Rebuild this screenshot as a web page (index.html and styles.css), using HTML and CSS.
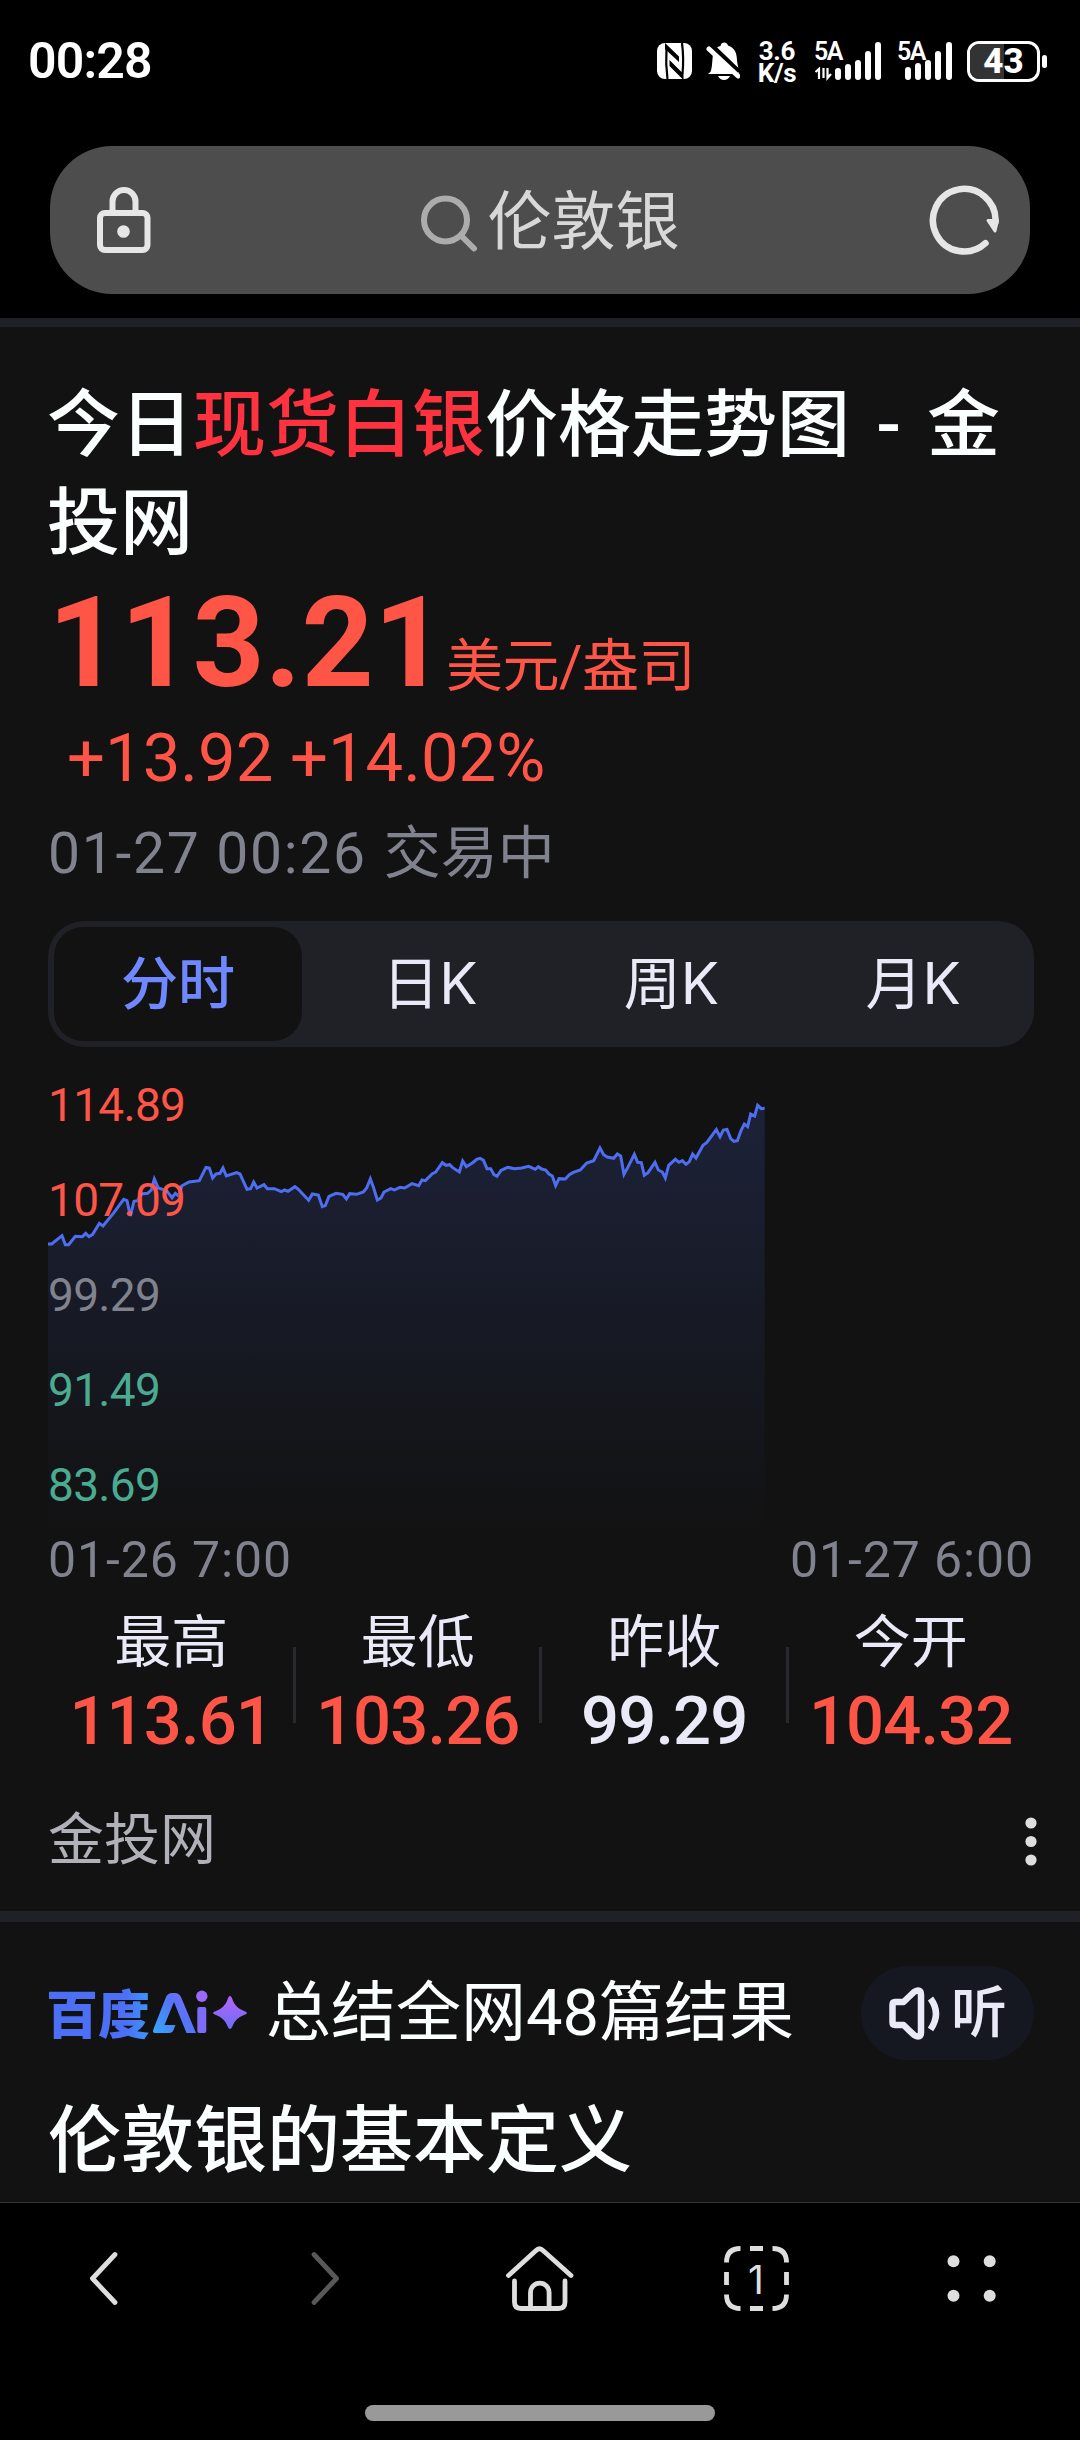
FILE: index.html
```html
<!DOCTYPE html>
<html lang="zh-CN">
<head>
<meta charset="utf-8">
<title>伦敦银</title>
<link rel="stylesheet" href="styles.css">
</head>
<body>
<header class="top">
  <div class="status">
    <span class="clock">00:28</span>
    <div class="status-icons">
      <svg class="nfc" width="36" height="38" viewBox="656 42 36 38"><rect x="657" y="43" width="35" height="36" rx="8" fill="#fff"/><path d="M666.500 48Q665.500 64 667.500 79M682 43Q684 58 682.500 74" fill="none" stroke="#000" stroke-width="2.200"/><path d="M665 43L679 56.500V62L665 49ZM669.500 60L683.500 74V80L669.500 66Z" fill="#000"/></svg>
      <svg class="bell" width="34" height="40" viewBox="706 41 34 40"><path d="M710.500 72C712 68 712 64 712.500 59C713 51 716 47 720.500 46C721 41.500 727 41.500 728 45.500C734.500 47.500 737 53 737 61L739 72Q739 74 736 74H709Q707 74 710.500 72Z" fill="#fff"/><path d="M718 76h12q-2 4-6 4t-6-4Z" fill="#fff"/><path d="M710 44l29 28" stroke="#000" stroke-width="5"/><path d="M709 49l29 27" stroke="#fff" stroke-width="5" stroke-linecap="round"/></svg>
      <span class="speed"><span>3.6</span><span>K/s</span></span>
      <span class="signal"><b>5A</b><svg width="70" height="40" viewBox="813 41 70 40"><g stroke="#fff" stroke-width="6" stroke-linecap="round"><path d="M838 71v6M848 67v10M858 63v14M868 54v23M878 45v32"/></g><path d="M815.500 72l3.500-3v10M823.500 68v10M827.500 68v10l3.500-4" fill="none" stroke="#fff" stroke-width="2.200"/></svg></span>
      <span class="signal second"><b>5A</b><svg width="58" height="40" viewBox="896 41 58 40"><g stroke="#fff" stroke-width="6" stroke-linecap="round"><path d="M908 70v7M918 66v11M928 63v14M938 54v23M949 45v32"/></g></svg></span>
      <span class="battery"><span class="charge"></span><span class="percent">43</span></span><i class="nub"></i>
    </div>
  </div>
  <div class="search">
    <svg width="64" height="76" viewBox="92 181 64 76" fill="none" stroke="#e6e6e6" stroke-width="6"><path d="M112.500 210V200.500a11.500 11.500 0 0 1 23 0V210"/><rect x="100" y="212" width="47.500" height="37" rx="5"/><circle cx="123.500" cy="230.500" r="6.300" fill="#e6e6e6" stroke="none"/></svg>
    <div class="query"><svg width="60" height="66" viewBox="418 185 60 66" fill="none" stroke="#acacac" stroke-width="6" stroke-linecap="round"><circle cx="444.500" cy="218" r="21.500"/><path d="M461 234.500l12 12"/></svg><span>伦敦银</span></div>
    <svg width="76" height="76" viewBox="926 181 76 76" fill="none" stroke="#e6e6e6" stroke-width="6.500" stroke-linecap="round"><path d="M985.500 242.200A31.300 31.300 0 1 1 995.500 221"/><path d="M988 219.500h9.500l-2.500 10.500Z" fill="#e6e6e6" stroke-width="3" stroke-linejoin="round"/></svg>
  </div>
</header>
<main>
  <article class="quote">
    <h1>今日<em>现货白银</em>价格走势图 - 金投网</h1>
    <div class="price"><strong>113.21</strong><span>美元/盎司</span></div>
    <div class="change"><span>+13.92</span> <span>+14.02%</span></div>
    <div class="time"><time>01-27 00:26</time> 交易中</div>
    <nav class="tabs"><a class="active">分时</a><a>日K</a><a>周K</a><a>月K</a></nav>
    <div class="chart">
      <svg width="986" height="455" viewBox="144 0 2958 1365">
        <defs>
          <linearGradient id="area" gradientUnits="userSpaceOnUse" x1="0" y1="76" x2="0" y2="1365"><stop offset="0" stop-color="#4e6ef2" stop-opacity=".17"/><stop offset="1" stop-color="#4e6ef2" stop-opacity="0"/></linearGradient>
          <path id="line" d="M144 492L155 492L186 467L196 494L206 494L226 469L247 470L257 460L267 470L278 463L298 430L309 438L340 400L371 358L381 362L391 408L402 364L412 362L424 342L443 340L454 330L463 297L475 324L500 332L516 353L526 340L536 348L545 318L567 306L598 302L618 262L628 264L638 294L648 282L660 280L669 264L679 288L710 278L720 282L741 328L752 326L761 306L771 324L792 314L802 326L823 326L844 335L854 330L864 334L885 320L895 328L926 361L937 342L955 345L967 380L976 377L987 349L1008 340L1028 343L1039 357L1049 341L1070 343L1090 336L1100 324L1111 297L1121 324L1132 360L1143 354L1152 336L1172 326L1183 330L1200 322L1214 324L1236 311L1256 317L1266 300L1276 302L1297 281L1307 276L1327 248L1338 256L1349 254L1358 263L1378 276L1388 243L1399 260L1418 248L1430 238L1440 235L1450 240L1461 266L1472 266L1482 284L1491 289L1503 271L1523 262L1544 266L1565 264L1586 259L1606 268L1615 260L1625 267L1637 270L1647 282L1657 288L1667 317L1677 296L1696 297L1708 284L1720 277L1741 270L1760 249L1781 242L1800 204L1811 224L1822 231L1841 235L1852 222L1862 228L1872 283L1883 263L1903 223L1913 247L1924 248L1933 286L1944 278L1965 247L1975 270L1987 276L1996 294L2006 256L2026 238L2037 247L2047 242L2058 253L2068 245L2078 222L2088 234L2109 196L2120 188L2149 149L2160 170L2170 150L2181 148L2192 176L2202 184L2212 182L2223 152L2233 132L2243 140L2252 102L2264 108L2273 76L2284 86L2294 85"/>
          <clipPath id="plot"><rect x="144" y="0" width="2151" height="1365"/></clipPath>
        </defs>
        <path fill="url(#area)" d="M144 492L155 492L186 467L196 494L206 494L226 469L247 470L257 460L267 470L278 463L298 430L309 438L340 400L371 358L381 362L391 408L402 364L412 362L424 342L443 340L454 330L463 297L475 324L500 332L516 353L526 340L536 348L545 318L567 306L598 302L618 262L628 264L638 294L648 282L660 280L669 264L679 288L710 278L720 282L741 328L752 326L761 306L771 324L792 314L802 326L823 326L844 335L854 330L864 334L885 320L895 328L926 361L937 342L955 345L967 380L976 377L987 349L1008 340L1028 343L1039 357L1049 341L1070 343L1090 336L1100 324L1111 297L1121 324L1132 360L1143 354L1152 336L1172 326L1183 330L1200 322L1214 324L1236 311L1256 317L1266 300L1276 302L1297 281L1307 276L1327 248L1338 256L1349 254L1358 263L1378 276L1388 243L1399 260L1418 248L1430 238L1440 235L1450 240L1461 266L1472 266L1482 284L1491 289L1503 271L1523 262L1544 266L1565 264L1586 259L1606 268L1615 260L1625 267L1637 270L1647 282L1657 288L1667 317L1677 296L1696 297L1708 284L1720 277L1741 270L1760 249L1781 242L1800 204L1811 224L1822 231L1841 235L1852 222L1862 228L1872 283L1883 263L1903 223L1913 247L1924 248L1933 286L1944 278L1965 247L1975 270L1987 276L1996 294L2006 256L2026 238L2037 247L2047 242L2058 253L2068 245L2078 222L2088 234L2109 196L2120 188L2149 149L2160 170L2170 150L2181 148L2192 176L2202 184L2212 182L2223 152L2233 132L2243 140L2252 102L2264 108L2273 76L2284 86L2294 85V1365H144Z"/>
        <use href="#line" fill="none" stroke="#4e6ef2" stroke-width="9" clip-path="url(#plot)"/>
      </svg>
      <div class="scale"><span class="up">114.89</span><span class="up">107.09</span><span>99.29</span><span class="down">91.49</span><span class="down">83.69</span></div>
    </div>
    <div class="axis"><span>01-26 7:00</span><span>01-27 6:00</span></div>
    <dl class="stats">
      <div><dt>最高</dt><dd class="up">113.61</dd></div>
      <div><dt>最低</dt><dd class="up">103.26</dd></div>
      <div><dt>昨收</dt><dd>99.29</dd></div>
      <div><dt>今开</dt><dd class="up">104.32</dd></div>
    </dl>
    <div class="source"><span>金投网</span><svg width="12" height="50" viewBox="0 0 12 50" fill="#dedede"><circle cx="6" cy="7" r="5.600"/><circle cx="6" cy="25.500" r="5.600"/><circle cx="6" cy="44" r="5.600"/></svg></div>
  </article>
  <section class="summary">
    <div class="summary-head">
      <span class="brand">百度</span>
      <svg class="ai" width="98" height="48" viewBox="151 1990 98 48" role="img" aria-label="Ai">
        <defs><linearGradient id="ai" gradientUnits="userSpaceOnUse" x1="153" y1="2034" x2="205" y2="1994"><stop offset="0" stop-color="#37a6ff"/><stop offset=".5" stop-color="#5474f6"/><stop offset="1" stop-color="#9a68fa"/></linearGradient><linearGradient id="spark" x1="0" y1="1" x2="0" y2="0"><stop offset="0" stop-color="#6d6cf8"/><stop offset="1" stop-color="#b565f8"/></linearGradient></defs>
        <path fill="url(#ai)" d="M155 2034Q152 2034 153.500 2030L166 1998Q168 1994 172 1994H175Q179 1994 181 1998L196 2034H186.500L174 2003L164.500 2026H175.500L173.500 2031Q172.500 2034 169 2034Z"/>
        <circle cx="201.800" cy="1997.200" r="5.700" fill="#9a68fa"/><rect x="197.300" y="2008" width="9" height="26" rx="2" fill="#7d6cf8"/>
        <path fill="url(#spark)" d="M230 1997Q231.500 1997 233 2002Q236 2009 244 2012Q247 2013 247 2014Q247 2015 244 2016Q236 2019 233 2026Q231.500 2030 230 2030Q228.500 2030 227 2026Q224 2019 216 2016Q213 2015 213 2014Q213 2013 216 2012Q224 2009 227 2002Q228.500 1997 230 1997Z"/>
      </svg>
      <span class="count">总结全网48篇结果</span>
      <span class="listen"><svg width="56" height="60" viewBox="888 1982 56 60" fill="none" stroke="#e9e9f7" stroke-width="6.500" stroke-linejoin="round"><path d="M896 2001Q893.500 2001 893.500 2004V2021Q893.500 2024 896 2024H904.500L915 2034Q922 2038 922 2031V1994Q922 1987 915 1991L904.500 2001Z"/><path d="M931.500 1997.500Q942.500 2012.500 931.500 2028.500"/></svg><span>听</span></span>
    </div>
    <h2>伦敦银的基本定义</h2>
  </section>
</main>
<footer class="bottom">
  <div class="toolbar">
    <svg width="80" height="80" viewBox="68 2238 80 80" class="ico"><path d="M115 2254.500L92.500 2278.500L115 2302.500"/></svg>
    <svg width="80" height="80" viewBox="284 2238 80 80" class="ico dim"><path d="M314 2254.500L336.500 2278.500L314 2302.500"/></svg>
    <svg width="80" height="80" viewBox="500 2238 80 80" class="ico"><path d="M508.500 2275.500L536 2250.500Q539.500 2247 543 2250.500L571 2275.500M514.500 2281V2302Q514.500 2308.500 521 2308.500H558.500Q565 2308.500 565 2302V2281M530.500 2308V2292.500a9.300 9.300 0 0 1 18.600 0V2308"/></svg>
    <div class="tab-count"><svg width="80" height="80" viewBox="716 2238 80 80" class="ico butt"><path d="M740.500 2248.500Q726.500 2248.500 726.500 2262.500M772.500 2248.500Q786.500 2248.500 786.500 2262.500M740.500 2308.500Q726.500 2308.500 726.500 2294.500M772.500 2308.500Q786.500 2308.500 786.500 2294.500M750 2248.500h13M750 2308.500h13M726.500 2272v13M786.500 2272v13"/></svg><span>1</span></div>
    <svg width="80" height="80" viewBox="932 2238 80 80" fill="#dedede"><circle cx="953.500" cy="2261.300" r="6"/><circle cx="989.700" cy="2261.300" r="6"/><circle cx="953.500" cy="2295.700" r="6"/><circle cx="989.700" cy="2295.700" r="6"/></svg>
  </div>
  <div class="home-bar"></div>
</footer>
</body>
</html>
```

FILE: styles.css
```css
* { box-sizing: border-box; }
body {
  margin: 0;
  width: 1080px;
  height: 2440px;
  overflow: hidden;
  background: #121212;
  color: #fcffff;
  font-family: Roboto, "Noto Sans CJK SC", sans-serif;
}
h1, h2, dl, dd { margin: 0; }
svg { display: block; flex: none; }

.top { height: 327px; background: #000; border-bottom: 9px solid #202126; }
.status { height: 146px; padding: 40px 33px 0 28px; display: flex; justify-content: space-between; align-items: flex-start; color: #fff; }
.clock { font: 600 50px/42px Roboto, sans-serif; letter-spacing: -.8px; }
.status-icons { display: flex; align-items: flex-start; height: 42px; }
.nfc { margin-top: 2px; }
.bell { margin: 1px 0 0 14px; }
.speed { width: 40px; margin-left: 17px; margin-right: 1px; display: flex; flex-direction: column; align-items: center; font: 700 26px/22px Roboto, sans-serif; letter-spacing: -.3px; }
.signal { position: relative; margin: 1px 0 0 15px; }
.signal.second { margin-left: 13px; }
.signal b { position: absolute; left: 1px; top: 0; font: 600 25px/22px Roboto, sans-serif; letter-spacing: -1.500px; }
.battery { position: relative; width: 73px; height: 41px; margin: 1px 0 0 13px; border: 3px solid #fff; border-radius: 12px; overflow: hidden; }
.charge { display: block; width: 50%; height: 100%; background: #333; }
.percent { position: absolute; inset: 0; text-align: center; font: 800 35px/36px Roboto, sans-serif; }
.nub { width: 5px; height: 13px; margin: 15px 0 0 2px; border-radius: 3px; background: #fff; }

.search { height: 148px; margin: 0 50px; padding: 0 28px 0 42px; border-radius: 62px; background: #4d4d4d; display: flex; align-items: center; justify-content: space-between; }
.query { display: flex; align-items: center; gap: 9px; margin-left: 16px; color: #d8d8d8; font-size: 64px; line-height: 104px; }
.query span { padding-top: 5px; }

.quote { padding: 49px 46px 0 48px; height: 1595px; border-bottom: 11px solid #202126; }
.quote h1 { font-size: 73px; line-height: 98px; font-weight: 500; margin-left: -1px; word-spacing: 8px; }
.quote em { font-style: normal; color: #ff3340; }
.price { display: flex; align-items: baseline; height: 142px; color: #ff5547; line-height: 142px; }
.price strong { width: 398px; font-size: 126px; font-weight: 700; }
.price span { font-size: 57px; letter-spacing: -.5px; }
.change { height: 86px; padding-left: 19px; color: #ff5547; font-size: 67px; line-height: 88px; font-weight: 450; }
.time { height: 108px; color: #80828d; font-size: 57px; line-height: 108px; }
.time time { letter-spacing: 1.700px; margin-right: 3px; }
.tabs { display: flex; height: 126px; margin-top: 13px; padding: 6px 0 6px 6px; border-radius: 36px; background: #202126; color: #e9e9f7; font-family: Inter, "Noto Sans CJK SC", sans-serif; font-size: 57px; line-height: 113px; }
.tabs a { flex: 1; text-align: center; }
.tabs .active { flex: none; width: 248px; margin-right: 7px; border-radius: 29px; background: #121212; color: #7088ff; font-weight: 500; }
.chart { display: grid; height: 455px; margin-top: 33px; }
.chart > * { grid-area: 1 / 1; }
.scale { display: flex; flex-direction: column; gap: 44px; color: #80828d; font-size: 46px; line-height: 51px; letter-spacing: -.7px; }
.up { color: #ff5547; }
.scale .down { color: #4aab91; }
.axis { display: flex; justify-content: space-between; height: 48px; color: #80828d; font-size: 50px; line-height: 50px; letter-spacing: .9px; }
.stats { display: grid; grid-template-columns: repeat(4, 1fr); margin-top: 25px; text-align: center; color: #e9e9f7; }
.stats div { position: relative; }
.stats div + div::before { content: ""; position: absolute; left: -2px; top: 39px; width: 3px; height: 76px; background: #292a2d; }
.stats dt { font-size: 57px; line-height: 69px; }
.stats dd { margin-top: 4px; font-size: 67px; line-height: 81px; font-weight: 500; white-space: nowrap; letter-spacing: -.9px; }
.source { display: flex; justify-content: space-between; align-items: center; height: 80px; margin: 38px -3px 0 0; color: #b1b1b9; font-size: 56px; line-height: 78px; }
.source svg { margin-top: 2px; }

.summary { height: 280px; padding: 44px 46px 0 48px; }
.summary-head { display: flex; align-items: center; height: 94px; }
.brand { font: 900 52px/94px "Noto Sans CJK SC", sans-serif; width: 105px; margin: -2px 0 0 -2px; background: linear-gradient(90deg, #4b6ff5 75%, #3d97fd); background-clip: text; color: transparent; }
.ai { margin-right: 17px; }
.count { font-size: 65px; line-height: 98px; white-space: nowrap; }
.listen { display: flex; align-items: center; width: 173px; height: 94px; margin-left: auto; padding-left: 26px; border-radius: 47px; background: #151821; color: #e9e9f7; font-size: 56px; line-height: 90px; font-weight: 500; }
.listen span { margin-left: 8px; }
.summary h2 { margin-top: 31px; font-size: 73px; line-height: 100px; font-weight: 500; }

.bottom { height: 238px; border-top: 1px solid #333; background: #000; display: flex; flex-direction: column; }
.toolbar { display: flex; justify-content: space-around; margin-top: 35px; color: #dedede; }
.ico { fill: none; stroke: #dedede; stroke-width: 4.800; stroke-linecap: round; stroke-linejoin: round; }
.dim { stroke: #585858; }
.butt { stroke-linecap: butt; }
.tab-count { position: relative; }
.tab-count span { position: absolute; inset: 0; text-align: center; font-family: Inter, sans-serif; font-size: 39px; line-height: 84px; }
.home-bar { width: 350px; height: 16px; margin: 87px auto 0; border-radius: 8px; background: #999; }
```
